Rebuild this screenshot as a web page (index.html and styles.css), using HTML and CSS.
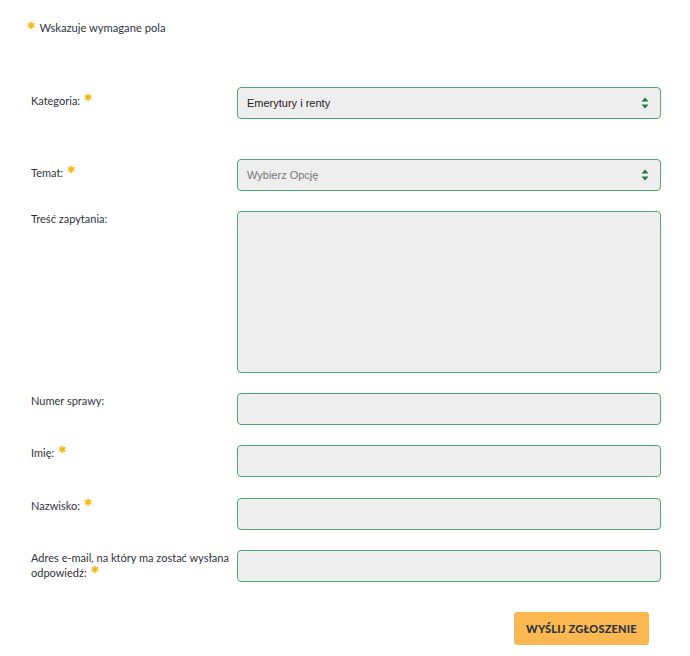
FILE: index.html
```html
<!DOCTYPE html>
<html lang="pl">
<head>
<meta charset="utf-8">
<link rel="stylesheet" href="styles.css">
</head>
<body>
<form class="form">
  <p class="note"><span class="star star-note">✱</span>Wskazuje wymagane pola</p>

  <div class="row row-first">
    <label class="label label-select">Kategoria:<span class="star">✱</span></label>
    <div class="field select">
      <span class="value">Emerytury i renty</span>
      <svg class="arrows" width="8" height="12" viewBox="0 0 8 12"><path d="M4 0.5 L7.5 4.5 H0.5 Z M4 11.5 L7.5 7.5 H0.5 Z" fill="#1e7a44"/></svg>
    </div>
  </div>

  <div class="row row-temat">
    <label class="label label-select">Temat:<span class="star">✱</span></label>
    <div class="field select">
      <span class="value placeholder">Wybierz Opcję</span>
      <svg class="arrows" width="8" height="12" viewBox="0 0 8 12"><path d="M4 0.5 L7.5 4.5 H0.5 Z M4 11.5 L7.5 7.5 H0.5 Z" fill="#1e7a44"/></svg>
    </div>
  </div>

  <div class="row">
    <label class="label">Treść zapytania:</label>
    <div class="field textarea"></div>
  </div>

  <div class="row">
    <label class="label">Numer sprawy:</label>
    <div class="field"></div>
  </div>

  <div class="row row-imie">
    <label class="label">Imię:<span class="star">✱</span></label>
    <div class="field"></div>
  </div>

  <div class="row">
    <label class="label">Nazwisko:<span class="star">✱</span></label>
    <div class="field"></div>
  </div>

  <div class="row">
    <label class="label">Adres e-mail, na który ma zostać wysłana odpowiedź:<span class="star">✱</span></label>
    <div class="field"></div>
  </div>

  <div class="actions">
    <button type="button" class="submit">WYŚLIJ ZGŁOSZENIE</button>
  </div>
</form>
</body>
</html>
```

FILE: styles.css
```css
* { box-sizing: border-box; }
html, body { margin: 0; padding: 0; background: #fff; }
body {
  font-family: Lato, "Open Sans", sans-serif;
  font-size: 11px;
  color: #2f3440;
}
.form {
  width: 690px;
  padding: 20px 0 0 31px;
}
.note {
  margin: 0 0 0 -4px;
  line-height: 16px;
  font-size: 11.2px;
}
.star {
  color: #f6b800;
  font-family: "DejaVu Sans", sans-serif;
  font-size: 10px;
  line-height: 0;
  margin-left: 4px;
  vertical-align: 4px;
}
.star-note {
  margin-left: 0;
  margin-right: 4px;
  vertical-align: 3px;
}
.row {
  display: flex;
  align-items: flex-start;
  margin-bottom: 20px;
}
.row-first {
  margin-top: 51px;
  margin-bottom: 40px;
}
.row-imie { margin-bottom: 21px; }
.label {
  width: 206px;
  flex: none;
  padding: 0 6px 0 0;
  line-height: 15px;
  font-size: 11px;
}
.label-select { padding-top: 6px; }
.field {
  width: 424px;
  height: 32px;
  background: #eeeeee;
  border: 1px solid #4fa874;
  border-radius: 4px;
}
.select {
  display: flex;
  align-items: center;
  justify-content: space-between;
  padding: 0 11px 0 9px;
  font-family: "Liberation Sans", Arial, sans-serif;
  font-size: 11px;
  color: #222;
}
.placeholder { color: #777; }
.arrows { display: block; }
.textarea { height: 162px; }
.actions {
  display: flex;
  justify-content: flex-end;
  width: 630px;
  padding-top: 10px;
}
.submit {
  width: 135px;
  height: 33px;
  border: none;
  border-radius: 3px;
  background: #fbb850;
  color: #2c3444;
  font-family: Lato, sans-serif;
  font-weight: 900;
  font-size: 11px;
  letter-spacing: 0.2px;
  padding: 0;
  margin-right: 12px;
}
```
